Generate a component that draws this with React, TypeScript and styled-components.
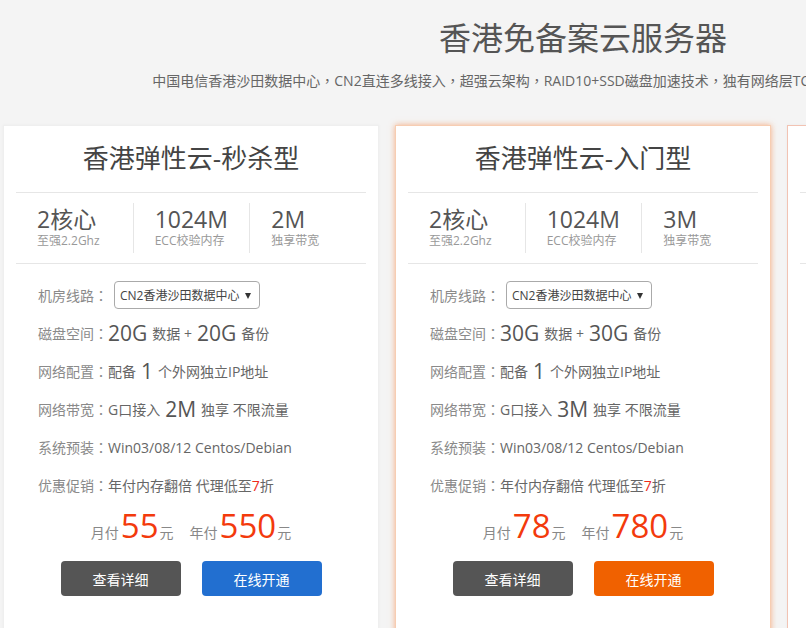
import React from "react";
import styled, { createGlobalStyle } from "styled-components";

const GlobalStyle = createGlobalStyle`
  html, body {
    margin: 0;
    padding: 0;
    background: #f4f4f4;
    overflow: hidden;
  }
  * {
    box-sizing: border-box;
  }
  body {
    font-family: "Open Sans", "Noto Sans CJK SC", sans-serif;
    color: #666;
  }
`;

type Tone = "plain" | "glow" | "line";

interface IPlan {
  name: string;
  cpu: string;
  ram: string;
  bandwidth: string;
  disk: string;
  ips: string;
  monthly: string;
  yearly: string;
  tone: Tone;
}

const plans: IPlan[] = [
  {
    name: "香港弹性云-秒杀型",
    cpu: "2核心",
    ram: "1024M",
    bandwidth: "2M",
    disk: "20G",
    ips: "1",
    monthly: "55",
    yearly: "550",
    tone: "plain"
  },
  {
    name: "香港弹性云-入门型",
    cpu: "2核心",
    ram: "1024M",
    bandwidth: "3M",
    disk: "30G",
    ips: "1",
    monthly: "78",
    yearly: "780",
    tone: "glow"
  },
  {
    name: "香港弹性云-标准型",
    cpu: "2核心",
    ram: "2048M",
    bandwidth: "5M",
    disk: "40G",
    ips: "1",
    monthly: "118",
    yearly: "1180",
    tone: "line"
  }
];

const Page = styled.div`
  width: 1160px;
  margin-left: 3px;
`;

const Header = styled.header`
  padding-top: 18px;
  text-align: center;
`;

const Heading = styled.h1`
  margin: 0;
  font-size: 32px;
  line-height: 40px;
  font-weight: 400;
  color: #555;
`;

const Subtitle = styled.p`
  margin: 12px 0 0;
  font-size: 14px;
  line-height: 20px;
  color: #666;
  white-space: nowrap;
`;

/* centred full-width punctuation, as the original page renders it */
const Punct = styled.span`
  font-family: "Noto Sans CJK TC", "Noto Sans CJK SC", sans-serif;
`;

const Cards = styled.div`
  display: grid;
  grid-template-columns: repeat(3, 376px);
  gap: 16px;
  margin-top: 34px;
`;

const Card = styled.section<{ $tone: Tone }>`
  background: #fff;
  padding-bottom: 40px;
  border: 1px solid
    ${p => (p.$tone === "line" ? "#f2c3b3" : p.$tone === "glow" ? "#f7cdb2" : "#efefef")};
  box-shadow: ${p =>
    p.$tone === "glow" ? "0 0 6px rgba(244, 128, 60, 0.6)" : "0 0 3px rgba(0, 0, 0, 0.04)"};
`;

const PlanName = styled.h2`
  margin: 0 12px;
  height: 67px;
  line-height: 64px;
  text-align: center;
  font-size: 26px;
  font-weight: 400;
  color: #444;
  border-bottom: 1px solid #e6e6e6;
`;

const Specs = styled.div`
  margin: 0 12px;
  height: 71px;
  display: grid;
  grid-template-columns: repeat(3, 1fr);
  align-items: center;
  border-bottom: 1px solid #e6e6e6;
`;

const Spec = styled.div`
  height: 50px;
  padding-left: 21px;
  display: flex;
  flex-direction: column;
  justify-content: center;
  & + & {
    border-left: 1px solid #e6e6e6;
  }
`;

const SpecValue = styled.span`
  font-size: 23px;
  line-height: 26px;
  color: #555;
`;

const SpecNote = styled.span`
  font-size: 12px;
  line-height: 18px;
  color: #999;
`;

const Details = styled.div`
  padding: 12px 0 0 34px;
`;

const Row = styled.div`
  display: flex;
  align-items: center;
  height: 38px;
  font-size: 14px;
  color: #666;
  white-space: nowrap;
`;

const Label = styled.span`
  color: #8a8a8a;
`;

const Big = styled.span<{ $first?: boolean }>`
  font-size: 21px;
  color: #555;
  margin: 0 5px 0 ${p => (p.$first ? "0" : "5px")};
`;

const Discount = styled.em`
  font-style: normal;
  color: #ee2a1b;
`;

const SelectBox = styled.div`
  position: relative;
  margin-left: 6px;
  width: 146px;
  height: 28px;
  padding-left: 5px;
  display: flex;
  align-items: center;
  font-size: 12px;
  color: #444;
  border: 1px solid #aaa;
  border-radius: 4px;
  &:after {
    content: "";
    position: absolute;
    right: 8px;
    top: 11px;
    border-left: 3.5px solid transparent;
    border-right: 3.5px solid transparent;
    border-top: 6px solid #333;
  }
`;

const Prices = styled.div`
  height: 46px;
  display: flex;
  justify-content: center;
  align-items: baseline;
  padding-top: 2px;
  font-size: 14px;
  color: #888;
`;

const PriceGroup = styled.span`
  & + & {
    margin-left: 16px;
  }
`;

const Amount = styled.span`
  font-size: 33px;
  line-height: 40px;
  color: #f33a0c;
  margin: 0 1px 0 2px;
`;

const Actions = styled.div`
  margin-top: 11px;
  display: flex;
  justify-content: center;
  gap: 21px;
`;

const Button = styled.button<{ $kind: "dark" | "blue" | "orange" }>`
  width: 120px;
  height: 35px;
  border: 0;
  border-radius: 4px;
  font-family: inherit;
  font-size: 14px;
  color: #fff;
  background: ${p =>
    p.$kind === "dark" ? "#555555" : p.$kind === "blue" ? "#226fd0" : "#f06100"};
`;

const Field: React.FC<{ label: string; children: React.ReactNode }> = ({ label, children }) => (
  <Row>
    <Label>
      {label}
      <Punct>：</Punct>
    </Label>
    {children}
  </Row>
);

const PlanCard: React.FC<{ plan: IPlan }> = ({ plan }) => (
  <Card $tone={plan.tone}>
    <PlanName>{plan.name}</PlanName>
    <Specs>
      <Spec>
        <SpecValue>{plan.cpu}</SpecValue>
        <SpecNote>至强2.2Ghz</SpecNote>
      </Spec>
      <Spec>
        <SpecValue>{plan.ram}</SpecValue>
        <SpecNote>ECC校验内存</SpecNote>
      </Spec>
      <Spec>
        <SpecValue>{plan.bandwidth}</SpecValue>
        <SpecNote>独享带宽</SpecNote>
      </Spec>
    </Specs>
    <Details>
      <Field label="机房线路">
        <SelectBox>CN2香港沙田数据中心</SelectBox>
      </Field>
      <Field label="磁盘空间">
        <Big $first>{plan.disk}</Big>数据 +<Big>{plan.disk}</Big>备份
      </Field>
      <Field label="网络配置">
        配备<Big>{plan.ips}</Big>个外网独立IP地址
      </Field>
      <Field label="网络带宽">
        G口接入<Big>{plan.bandwidth}</Big>独享 不限流量
      </Field>
      <Field label="系统预装">Win03/08/12 Centos/Debian</Field>
      <Field label="优惠促销">
        <span>年付内存翻倍 代理低至</span>
        <Discount>7</Discount>
        <span>折</span>
      </Field>
    </Details>
    <Prices>
      <PriceGroup>
        月付<Amount>{plan.monthly}</Amount>元
      </PriceGroup>
      <PriceGroup>
        年付<Amount>{plan.yearly}</Amount>元
      </PriceGroup>
    </Prices>
    <Actions>
      <Button $kind="dark">查看详细</Button>
      <Button $kind={plan.tone === "glow" ? "orange" : "blue"}>在线开通</Button>
    </Actions>
  </Card>
);

export default function App() {
  return (
    <Page>
      <GlobalStyle />
      <Header>
        <Heading>香港免备案云服务器</Heading>
        <Subtitle>
          中国电信香港沙田数据中心<Punct>，</Punct>CN2直连多线接入<Punct>，</Punct>超强云架构
          <Punct>，</Punct>RAID10+SSD磁盘加速技术<Punct>，</Punct>独有网络层TCP防护
          <Punct>，</Punct>全面保障业务稳定运行<Punct>。</Punct>
        </Subtitle>
      </Header>
      <Cards>
        {plans.map(plan => (
          <PlanCard key={plan.name} plan={plan} />
        ))}
      </Cards>
    </Page>
  );
}
